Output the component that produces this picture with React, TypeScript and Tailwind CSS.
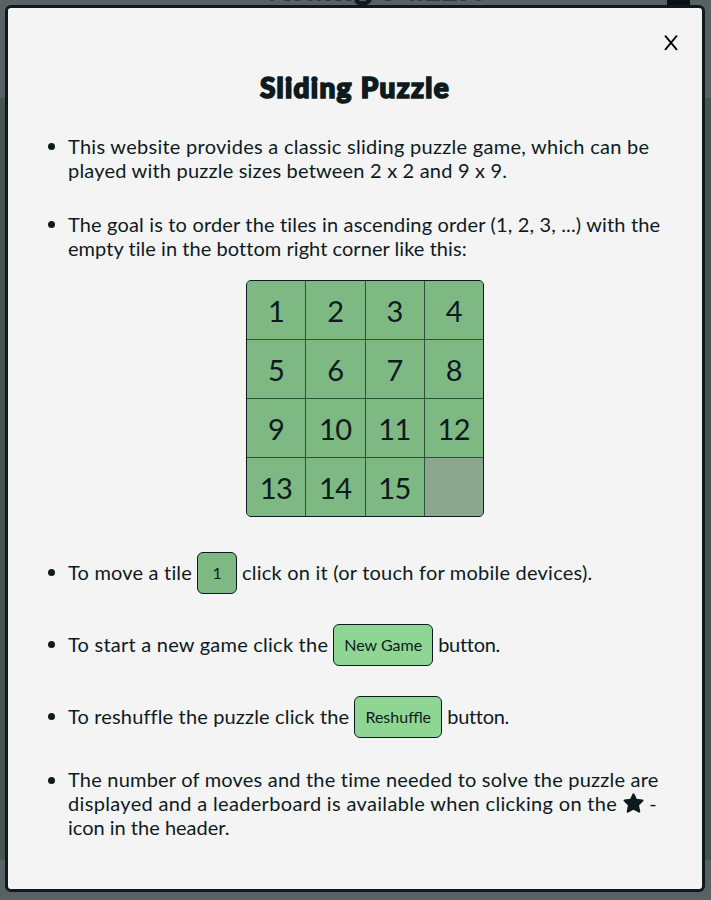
import type { ReactNode } from "react";

const tiles = Array.from({ length: 15 }, (_, i) => i + 1);

function Line({ children, track }: { children: ReactNode; track: string }) {
  return <span className={`block w-fit h-6 whitespace-nowrap ${track}`}>{children}</span>;
}

function Item({ children, row = false }: { children: ReactNode; row?: boolean }) {
  return (
    <li className="flex">
      <span className={`ml-[-20px] mr-[13px] h-[7px] w-[7px] shrink-0 rounded-full bg-[#0d1b1e] ${row ? "mt-[17px]" : "mt-[9px]"}`} />
      <div className="min-w-0 flex-1">{children}</div>
    </li>
  );
}

function Star() {
  return (
    <svg className="mr-0 ml-0 -mt-1.5 inline-block h-5 w-[21px]" viewBox="0 0 21 20" fill="#0d1b1e" stroke="#0d1b1e" strokeWidth="2" strokeLinejoin="round">
      <path d="M10.5 1.3 L13.1 6.7 L19.5 7.6 L15 12 L16.3 18.7 L10.5 15.5 L4.7 18.7 L6 12 L1.5 7.6 L7.9 6.7 Z" />
    </svg>
  );
}

export default function App() {
  return (
    <div className="relative h-[900px] w-[711px] overflow-hidden bg-[#586164] font-['Lato',sans-serif] text-[#0d1b1e]">
      <header className="flex h-[98px] justify-center">
        <span className="-mt-[33px] ml-[41px] h-10 whitespace-nowrap text-[33px] leading-10 font-black tracking-[1.6px] [-webkit-text-stroke:1px_#0d1b1e]">Sliding Puzzle</span>
      </header>
      <div className="h-[762px] bg-[#46564f]" />
      <div className="absolute top-0 left-[667px] h-2 w-[23px] bg-[#081113]" />

      <section className="absolute top-[5px] left-[5px] flex h-[887px] w-[700px] flex-col rounded-[6px] border-[3px] border-[#0d1b1e] bg-[#f4f4f4]">
        <button className="mt-[25px] mr-[21px] flex h-5 w-5 items-center justify-center self-end" aria-label="Close">
          <svg className="h-4 w-3.5" viewBox="0 0 14 16" fill="none" stroke="#000" strokeWidth="1.8" strokeLinecap="round">
            <path d="M1.5 1.2 12.5 14.4M12.5 1.2 1.5 14.4" />
          </svg>
        </button>
        <h1 className="mt-[14px] h-10 w-fit self-center text-[28px] leading-10 font-black whitespace-nowrap tracking-[1.3px] [-webkit-text-stroke:1.7px_#0d1b1e]">Sliding Puzzle</h1>
        <ul className="mt-[27px] flex flex-col gap-[30px] pr-5 pl-[60px] text-[20px] leading-6">
          <Item>
            <Line track="tracking-[0.27px]">This website provides a classic sliding puzzle game, which can be</Line>
            <Line track="tracking-[0.2px]">played with puzzle sizes between 2 x 2 and 9 x 9.</Line>
          </Item>
          <Item>
            <Line track="tracking-[0.16px]">The goal is to order the tiles in ascending order (1, 2, 3, ...) with the</Line>
            <Line track="tracking-[0.05px]">empty tile in the bottom right corner like this:</Line>
            <div className="mt-[20px] mb-[5px] ml-[178px] grid h-[237px] w-[238px] grid-cols-4 grid-rows-4 gap-px overflow-hidden rounded-[5px] border border-[#0d1b1e] bg-[#31513f]">
              {tiles.map((n) => (
                <div key={n} className="flex items-center justify-center bg-[#7eb984] text-[29px] leading-none tracking-[-0.5px]">{n}</div>
              ))}
              <div className="bg-[#8ca78f]" />
            </div>
          </Item>
          <Item row>
            <div className="flex h-[42px] items-center whitespace-nowrap">
              <div className="mb-0.5"><Line track="tracking-[0.19px]">To move a tile</Line></div>
              <span className="mx-[5px] flex h-[42px] w-10 items-center justify-center rounded-[6px] border border-[#0d1b1e] bg-[#7eb984] text-base">1</span>
              <div className="mb-0.5"><Line track="tracking-[0.22px]">click on it (or touch for mobile devices).</Line></div>
            </div>
          </Item>
          <Item row>
            <div className="flex h-[42px] items-center whitespace-nowrap">
              <div className="mb-0.5"><Line track="tracking-[0.23px]">To start a new game click the</Line></div>
              <span className="mx-[5px] flex h-[42px] w-[100px] items-center justify-center rounded-[6px] border border-[#0d1b1e] bg-[#8fd694] text-base">New Game</span>
              <div className="mb-0.5"><Line track="tracking-[-0.3px]">button.</Line></div>
            </div>
          </Item>
          <Item row>
            <div className="flex h-[42px] items-center whitespace-nowrap">
              <div className="mb-0.5"><Line track="tracking-[0.15px]">To reshuffle the puzzle click the</Line></div>
              <span className="mx-[5px] flex h-[42px] w-[88px] items-center justify-center rounded-[6px] border border-[#0d1b1e] bg-[#8fd694] text-base">Reshuffle</span>
              <div className="mb-0.5"><Line track="tracking-[-0.3px]">button.</Line></div>
            </div>
          </Item>
          <Item>
            <div className="-mt-px">
              <Line track="tracking-[0.2px]">The number of moves and the time needed to solve the puzzle are</Line>
              <Line track="tracking-[0.33px]">displayed and a leaderboard is available when clicking on the <Star /> -</Line>
              <Line track="tracking-[0px]">icon in the header.</Line>
            </div>
          </Item>
        </ul>
      </section>
    </div>
  );
}
